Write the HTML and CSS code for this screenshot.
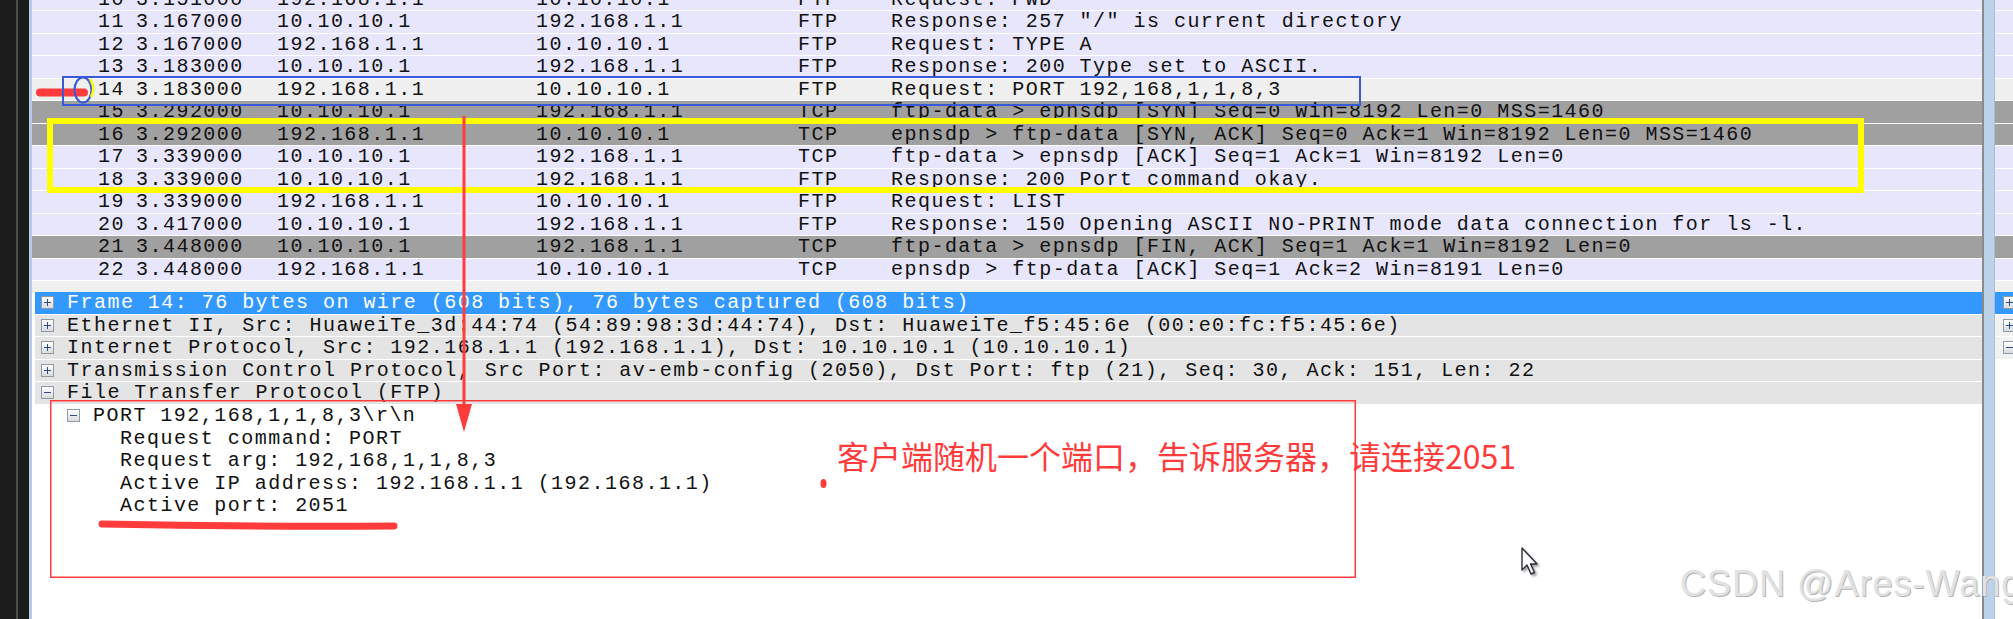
FILE: index.html
```html
<!DOCTYPE html>
<html lang="zh-CN">

<head>
    <meta charset="UTF-8">
    <title>FTP PORT capture</title>
    <link rel="stylesheet" href="styles.css">
</head>

<body>
    <div class="screen">
        <div class="edge"></div>
        <div class="rim"></div>

        <div class="main">
            <div class="packet-list">
                <div class="rows">
                    <div class="pkt lav"><span>10</span><span>3.151000</span><span>192.168.1.1</span><span>10.10.10.1</span><span>FTP</span><span>Request: PWD</span></div>
                    <div class="pkt lav"><span>11</span><span>3.167000</span><span>10.10.10.1</span><span>192.168.1.1</span><span>FTP</span><span>Response: 257 "/" is current directory</span></div>
                    <div class="pkt lav"><span>12</span><span>3.167000</span><span>192.168.1.1</span><span>10.10.10.1</span><span>FTP</span><span>Request: TYPE A</span></div>
                    <div class="pkt lav"><span>13</span><span>3.183000</span><span>10.10.10.1</span><span>192.168.1.1</span><span>FTP</span><span>Response: 200 Type set to ASCII.</span></div>
                    <div class="pkt current"><span>14</span><span>3.183000</span><span>192.168.1.1</span><span>10.10.10.1</span><span>FTP</span><span>Request: PORT 192,168,1,1,8,3</span></div>
                    <div class="pkt grey"><span>15</span><span>3.292000</span><span>10.10.10.1</span><span>192.168.1.1</span><span>TCP</span><span>ftp-data &gt; epnsdp [SYN] Seq=0 Win=8192 Len=0 MSS=1460</span></div>
                    <div class="pkt grey"><span>16</span><span>3.292000</span><span>192.168.1.1</span><span>10.10.10.1</span><span>TCP</span><span>epnsdp &gt; ftp-data [SYN, ACK] Seq=0 Ack=1 Win=8192 Len=0 MSS=1460</span></div>
                    <div class="pkt lav"><span>17</span><span>3.339000</span><span>10.10.10.1</span><span>192.168.1.1</span><span>TCP</span><span>ftp-data &gt; epnsdp [ACK] Seq=1 Ack=1 Win=8192 Len=0</span></div>
                    <div class="pkt lav"><span>18</span><span>3.339000</span><span>10.10.10.1</span><span>192.168.1.1</span><span>FTP</span><span>Response: 200 Port command okay.</span></div>
                    <div class="pkt lav"><span>19</span><span>3.339000</span><span>192.168.1.1</span><span>10.10.10.1</span><span>FTP</span><span>Request: LIST</span></div>
                    <div class="pkt lav"><span>20</span><span>3.417000</span><span>10.10.10.1</span><span>192.168.1.1</span><span>FTP</span><span>Response: 150 Opening ASCII NO-PRINT mode data connection for ls -l.</span></div>
                    <div class="pkt grey"><span>21</span><span>3.448000</span><span>10.10.10.1</span><span>192.168.1.1</span><span>TCP</span><span>ftp-data &gt; epnsdp [FIN, ACK] Seq=1 Ack=1 Win=8192 Len=0</span></div>
                    <div class="pkt lav"><span>22</span><span>3.448000</span><span>192.168.1.1</span><span>10.10.10.1</span><span>TCP</span><span>epnsdp &gt; ftp-data [ACK] Seq=1 Ack=2 Win=8191 Len=0</span></div>
                </div>
            </div>

            <div class="details">
                <div class="tree-row top selected lvl0"><span class="toggle plus"></span><span>Frame 14: 76 bytes on wire (608 bits), 76 bytes captured (608 bits)</span></div>
                <div class="tree-row top lvl0"><span class="toggle plus"></span><span>Ethernet II, Src: HuaweiTe_3d:44:74 (54:89:98:3d:44:74), Dst: HuaweiTe_f5:45:6e (00:e0:fc:f5:45:6e)</span></div>
                <div class="tree-row top lvl0"><span class="toggle plus"></span><span>Internet Protocol, Src: 192.168.1.1 (192.168.1.1), Dst: 10.10.10.1 (10.10.10.1)</span></div>
                <div class="tree-row top lvl0"><span class="toggle plus"></span><span>Transmission Control Protocol, Src Port: av-emb-config (2050), Dst Port: ftp (21), Seq: 30, Ack: 151, Len: 22</span></div>
                <div class="tree-row top lvl0"><span class="toggle"></span><span>File Transfer Protocol (FTP)</span></div>
                <div class="tree-row lvl1"><span class="toggle"></span><span>PORT 192,168,1,1,8,3\r\n</span></div>
                <div class="tree-row lvl2"><span>Request command: PORT</span></div>
                <div class="tree-row lvl2"><span>Request arg: 192,168,1,1,8,3</span></div>
                <div class="tree-row lvl2"><span>Active IP address: 192.168.1.1 (192.168.1.1)</span></div>
                <div class="tree-row lvl2"><span>Active port: 2051</span></div>
            </div>
        </div>

        <div class="divider"></div>

        <div class="side">
            <div class="packet-list">
                <div class="rows">
                    <div class="pkt lav"></div>
                    <div class="pkt lav"></div>
                    <div class="pkt lav"></div>
                    <div class="pkt lav"></div>
                    <div class="pkt current"></div>
                    <div class="pkt grey"></div>
                    <div class="pkt grey"></div>
                    <div class="pkt lav"></div>
                    <div class="pkt lav"></div>
                    <div class="pkt lav"></div>
                    <div class="pkt lav"></div>
                    <div class="pkt grey"></div>
                    <div class="pkt lav"></div>
                </div>
            </div>
            <div class="details side-details">
                <div class="tree-row top selected"><span class="toggle plus"></span></div>
                <div class="tree-row side-row"><span class="toggle plus"></span></div>
                <div class="tree-row side-row"><span class="toggle"></span></div>
            </div>
        </div>
    </div>

    <!-- annotations drawn on top of the screenshot -->
    <svg class="marks" width="2013" height="619" viewBox="0 0 2013 619">
        <line x1="40" y1="92.5" x2="84" y2="92.5" stroke="#ff3b3b" stroke-width="8" stroke-linecap="round" />
        <ellipse cx="83" cy="90" rx="8.5" ry="12.5" fill="none" stroke="#3b5bd6" stroke-width="2.2" />
        <path d="M90 79 Q96 88 91 97" fill="none" stroke="#ffff00" stroke-width="2.5" />
        <rect x="63" y="77" width="1297" height="28" fill="none" stroke="#3b5bd6" stroke-width="2" />
        <rect x="50" y="121" width="1811" height="69" fill="none" stroke="#ffff00" stroke-width="6" />
        <line x1="464" y1="116" x2="464" y2="410" stroke="#ff3b3b" stroke-width="3" />
        <polygon points="456,404 472,404 464,432" fill="#ff3b3b" />
        <rect x="50.75" y="400.75" width="1304.5" height="176.5" fill="none" stroke="#ff3b3b" stroke-width="1.5" />
        <path d="M102 524 Q250 527 394 526" fill="none" stroke="#ff3b3b" stroke-width="7" stroke-linecap="round" />
        <ellipse cx="823.5" cy="483.5" rx="3" ry="4.5" fill="#ff3b3b" />
    </svg>

    <div class="note">客户端随机一个端口，告诉服务器，请连接2051</div>

    <svg class="cursor" width="24" height="32" viewBox="0 0 24 32">
        <path d="M2 2 L2 24 L7 19 L11 28 L14.5 26.5 L10.5 18 L17 18 Z" fill="#fff" stroke="#2c2c3a" stroke-width="1.4" stroke-linejoin="round" />
    </svg>

    <div class="watermark">CSDN @Ares-Wang</div>
</body>

</html>
```

FILE: styles.css
```css
body {
    margin: 0;
    width: 2013px;
    height: 619px;
    overflow: hidden;
    position: relative;
    background: #fff;
    font-family: "Liberation Mono", "DejaVu Sans Mono", monospace;
}

.screen {
    display: flex;
    height: 619px;
}

.edge {
    width: 29px;
    flex: none;
    background: linear-gradient(to right, #1c1c1c 16px, #4d4d4d 16px, #4d4d4d 18px, #1c1c1c 18px);
}

.rim {
    width: 3px;
    flex: none;
    background: #b6cde6;
}

.main {
    width: 1950px;
    flex: none;
    display: flex;
    flex-direction: column;
    overflow: hidden;
}

/* packet list */

.packet-list {
    height: 292px;
    flex: none;
    overflow: hidden;
    background: #f0f0f0;
}

.rows {
    margin-top: -11.4px;
}

.pkt {
    display: grid;
    grid-template-columns: 38px 141px 259px 262px 93px auto;
    padding-left: 66px;
    height: 22.5px;
    line-height: 21.5px;
    box-sizing: border-box;
    border-bottom: 1px solid #fff;
    font-size: 20px;
    letter-spacing: 1.47px;
    color: #111;
    white-space: nowrap;
}

.pkt.lav {
    background: #e7e6fd;
}

.pkt.grey {
    background: #a0a0a0;
}

.pkt.current {
    background: #efefef;
}

/* packet details */

.details {
    flex: 1;
    background: #fff;
    padding-left: 3px;
}

.tree-row {
    display: flex;
    align-items: center;
    height: 22.5px;
    box-sizing: border-box;
    font-size: 20px;
    letter-spacing: 1.47px;
    color: #111;
    white-space: nowrap;
}

.tree-row.top {
    background: #e4e4e4;
    border-bottom: 1px solid #fff;
}

.tree-row.selected {
    background: #3399ff;
    color: #fff;
}

.lvl0 {
    padding-left: 6px;
}

.lvl1 {
    padding-left: 32px;
}

.lvl2 {
    padding-left: 85px;
}

.toggle {
    position: relative;
    width: 13px;
    height: 13px;
    flex: none;
    box-sizing: border-box;
    margin-right: 13px;
    border: 1px solid #8f9aa7;
    background: linear-gradient(#ffffff, #d9dbdf);
}

.toggle::before {
    content: "";
    position: absolute;
    left: 2px;
    right: 2px;
    top: 5px;
    height: 1px;
    background: #2d4b85;
}

.toggle.plus::after {
    content: "";
    position: absolute;
    top: 2px;
    bottom: 2px;
    left: 5px;
    width: 1px;
    background: #2d4b85;
}

/* splitter and the neighbouring window */

.divider {
    width: 13px;
    flex: none;
    background: linear-gradient(to right, #8a8a8a 2px, #bdd3ea 2px, #bdd3ea 12px, #a7bdd4 12px);
}

.side {
    flex: 1;
    display: flex;
    flex-direction: column;
    overflow: hidden;
}

.side .pkt {
    padding-left: 0;
}

.side-details {
    padding-left: 0;
}

.side-details .tree-row {
    padding-left: 8px;
}

.side-row {
    background: #f2f2f2;
    border-bottom: 1px solid #fff;
}

/* annotations */

.marks {
    position: absolute;
    left: 0;
    top: 0;
    pointer-events: none;
}

.note {
    position: absolute;
    left: 837px;
    top: 439px;
    font-family: "Noto Sans CJK SC", sans-serif;
    font-size: 32px;
    line-height: 32px;
    color: #ff3b3b;
    white-space: nowrap;
}

.cursor {
    position: absolute;
    left: 1520px;
    top: 546px;
    filter: drop-shadow(2px 2px 1px rgba(0, 0, 0, 0.35));
}

.watermark {
    position: absolute;
    left: 1680px;
    top: 566px;
    font-family: "Liberation Sans", Arial, sans-serif;
    font-size: 36px;
    line-height: 36px;
    letter-spacing: 1px;
    color: #e2e2e2;
    text-shadow: 1px 1px 0 #b4b4b4;
    white-space: nowrap;
}
```
